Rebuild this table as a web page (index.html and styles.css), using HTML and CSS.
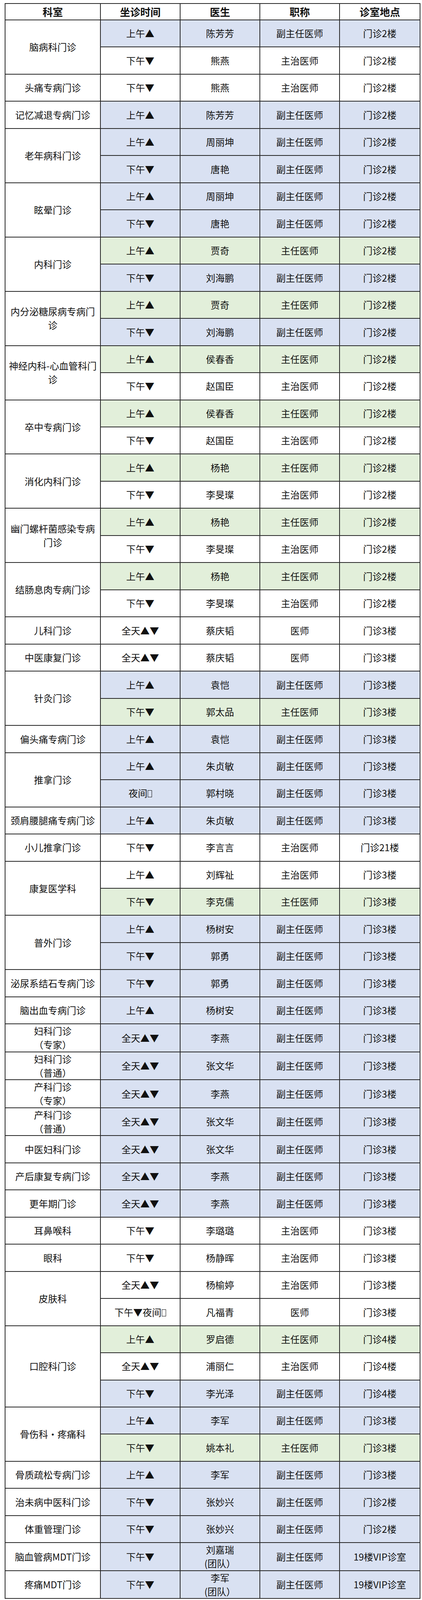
FILE: index.html
```html
<!DOCTYPE html>
<html lang="zh-CN">
<head>
<meta charset="utf-8">
<title>门诊坐诊时间表</title>
<link rel="stylesheet" href="styles.css">
</head>
<body>
<table class="schedule">
<colgroup>
<col class="c-dept"><col class="c-time"><col class="c-doc"><col class="c-title"><col class="c-room">
</colgroup>
<thead>
<tr><th>科室</th><th>坐诊时间</th><th>医生</th><th>职称</th><th>诊室地点</th></tr>
</thead>
<tbody>
<tr class="b"><td class="dept" rowspan="2">脑病科门诊</td><td>上午▲</td><td>陈芳芳</td><td>副主任医师</td><td>门诊2楼</td></tr>
<tr class="w"><td>下午▼</td><td>熊燕</td><td>主治医师</td><td>门诊2楼</td></tr>
<tr class="w"><td class="dept">头痛专病门诊</td><td>下午▼</td><td>熊燕</td><td>主治医师</td><td>门诊2楼</td></tr>
<tr class="b"><td class="dept">记忆减退专病门诊</td><td>上午▲</td><td>陈芳芳</td><td>副主任医师</td><td>门诊2楼</td></tr>
<tr class="b"><td class="dept" rowspan="2">老年病科门诊</td><td>上午▲</td><td>周丽坤</td><td>副主任医师</td><td>门诊2楼</td></tr>
<tr class="b"><td>下午▼</td><td>唐艳</td><td>副主任医师</td><td>门诊2楼</td></tr>
<tr class="b"><td class="dept" rowspan="2">眩晕门诊</td><td>上午▲</td><td>周丽坤</td><td>副主任医师</td><td>门诊2楼</td></tr>
<tr class="b"><td>下午▼</td><td>唐艳</td><td>副主任医师</td><td>门诊2楼</td></tr>
<tr class="g"><td class="dept" rowspan="2">内科门诊</td><td>上午▲</td><td>贾奇</td><td>主任医师</td><td>门诊2楼</td></tr>
<tr class="b"><td>下午▼</td><td>刘海鹏</td><td>副主任医师</td><td>门诊2楼</td></tr>
<tr class="g"><td class="dept" rowspan="2">内分泌糖尿病专病门诊</td><td>上午▲</td><td>贾奇</td><td>主任医师</td><td>门诊2楼</td></tr>
<tr class="b"><td>下午▼</td><td>刘海鹏</td><td>副主任医师</td><td>门诊2楼</td></tr>
<tr class="g"><td class="dept" rowspan="2">神经内科-心血管科门诊</td><td>上午▲</td><td>侯春香</td><td>主任医师</td><td>门诊2楼</td></tr>
<tr class="w"><td>下午▼</td><td>赵国臣</td><td>主治医师</td><td>门诊2楼</td></tr>
<tr class="g"><td class="dept" rowspan="2">卒中专病门诊</td><td>上午▲</td><td>侯春香</td><td>主任医师</td><td>门诊2楼</td></tr>
<tr class="w"><td>下午▼</td><td>赵国臣</td><td>主治医师</td><td>门诊2楼</td></tr>
<tr class="g"><td class="dept" rowspan="2">消化内科门诊</td><td>上午▲</td><td>杨艳</td><td>主任医师</td><td>门诊2楼</td></tr>
<tr class="w"><td>下午▼</td><td>李旻璨</td><td>主治医师</td><td>门诊2楼</td></tr>
<tr class="g"><td class="dept" rowspan="2">幽门螺杆菌感染专病门诊</td><td>上午▲</td><td>杨艳</td><td>主任医师</td><td>门诊2楼</td></tr>
<tr class="w"><td>下午▼</td><td>李旻璨</td><td>主治医师</td><td>门诊2楼</td></tr>
<tr class="g"><td class="dept" rowspan="2">结肠息肉专病门诊</td><td>上午▲</td><td>杨艳</td><td>主任医师</td><td>门诊2楼</td></tr>
<tr class="w"><td>下午▼</td><td>李旻璨</td><td>主治医师</td><td>门诊2楼</td></tr>
<tr class="w"><td class="dept">儿科门诊</td><td>全天▲▼</td><td>蔡庆韬</td><td>医师</td><td>门诊3楼</td></tr>
<tr class="w"><td class="dept">中医康复门诊</td><td>全天▲▼</td><td>蔡庆韬</td><td>医师</td><td>门诊3楼</td></tr>
<tr class="b"><td class="dept" rowspan="2">针灸门诊</td><td>上午▲</td><td>袁恺</td><td>副主任医师</td><td>门诊3楼</td></tr>
<tr class="g"><td>下午▼</td><td>郭太品</td><td>主任医师</td><td>门诊3楼</td></tr>
<tr class="b"><td class="dept">偏头痛专病门诊</td><td>上午▲</td><td>袁恺</td><td>副主任医师</td><td>门诊3楼</td></tr>
<tr class="b"><td class="dept" rowspan="2">推拿门诊</td><td>上午▲</td><td>朱贞敏</td><td>副主任医师</td><td>门诊3楼</td></tr>
<tr class="b"><td>夜间<span class="tofu"></span></td><td>郭村晓</td><td>副主任医师</td><td>门诊3楼</td></tr>
<tr class="b"><td class="dept">颈肩腰腿痛专病门诊</td><td>上午▲</td><td>朱贞敏</td><td>副主任医师</td><td>门诊3楼</td></tr>
<tr class="w"><td class="dept">小儿推拿门诊</td><td>下午▼</td><td>李言言</td><td>主治医师</td><td>门诊21楼</td></tr>
<tr class="w"><td class="dept" rowspan="2">康复医学科</td><td>上午▲</td><td>刘辉祉</td><td>主治医师</td><td>门诊3楼</td></tr>
<tr class="g"><td>下午▼</td><td>李克儒</td><td>主任医师</td><td>门诊3楼</td></tr>
<tr class="b"><td class="dept" rowspan="2">普外门诊</td><td>上午▲</td><td>杨树安</td><td>副主任医师</td><td>门诊3楼</td></tr>
<tr class="b"><td>下午▼</td><td>郭勇</td><td>副主任医师</td><td>门诊3楼</td></tr>
<tr class="b"><td class="dept">泌尿系结石专病门诊</td><td>下午▼</td><td>郭勇</td><td>副主任医师</td><td>门诊3楼</td></tr>
<tr class="b"><td class="dept">脑出血专病门诊</td><td>上午▲</td><td>杨树安</td><td>副主任医师</td><td>门诊3楼</td></tr>
<tr class="b"><td class="dept">妇科门诊<br>（专家）</td><td>全天▲▼</td><td>李燕</td><td>副主任医师</td><td>门诊3楼</td></tr>
<tr class="b"><td class="dept">妇科门诊<br>（普通）</td><td>全天▲▼</td><td>张文华</td><td>副主任医师</td><td>门诊3楼</td></tr>
<tr class="b"><td class="dept">产科门诊<br>（专家）</td><td>全天▲▼</td><td>李燕</td><td>副主任医师</td><td>门诊3楼</td></tr>
<tr class="b"><td class="dept">产科门诊<br>（普通）</td><td>全天▲▼</td><td>张文华</td><td>副主任医师</td><td>门诊3楼</td></tr>
<tr class="b"><td class="dept">中医妇科门诊</td><td>全天▲▼</td><td>张文华</td><td>副主任医师</td><td>门诊3楼</td></tr>
<tr class="b"><td class="dept">产后康复专病门诊</td><td>全天▲▼</td><td>李燕</td><td>副主任医师</td><td>门诊3楼</td></tr>
<tr class="b"><td class="dept">更年期门诊</td><td>全天▲▼</td><td>李燕</td><td>副主任医师</td><td>门诊3楼</td></tr>
<tr class="w"><td class="dept">耳鼻喉科</td><td>下午▼</td><td>李璐璐</td><td>主治医师</td><td>门诊3楼</td></tr>
<tr class="w"><td class="dept">眼科</td><td>下午▼</td><td>杨静晖</td><td>主治医师</td><td>门诊3楼</td></tr>
<tr class="w"><td class="dept" rowspan="2">皮肤科</td><td>全天▲▼</td><td>杨榆婷</td><td>主治医师</td><td>门诊3楼</td></tr>
<tr class="w"><td>下午▼夜间<span class="tofu"></span></td><td>凡福青</td><td>医师</td><td>门诊3楼</td></tr>
<tr class="g"><td class="dept" rowspan="3">口腔科门诊</td><td>上午▲</td><td>罗启德</td><td>主任医师</td><td>门诊4楼</td></tr>
<tr class="w"><td>全天▲▼</td><td>浦丽仁</td><td>主治医师</td><td>门诊4楼</td></tr>
<tr class="b"><td>下午▼</td><td>李光泽</td><td>副主任医师</td><td>门诊4楼</td></tr>
<tr class="b"><td class="dept" rowspan="2">骨伤科·疼痛科</td><td>上午▲</td><td>李军</td><td>副主任医师</td><td>门诊3楼</td></tr>
<tr class="g"><td>下午▼</td><td>姚本礼</td><td>主任医师</td><td>门诊3楼</td></tr>
<tr class="b"><td class="dept">骨质疏松专病门诊</td><td>上午▲</td><td>李军</td><td>副主任医师</td><td>门诊3楼</td></tr>
<tr class="b"><td class="dept">治未病中医科门诊</td><td>下午▼</td><td>张妙兴</td><td>副主任医师</td><td>门诊2楼</td></tr>
<tr class="b"><td class="dept">体重管理门诊</td><td>下午▼</td><td>张妙兴</td><td>副主任医师</td><td>门诊2楼</td></tr>
<tr class="b"><td class="dept">脑血管病MDT门诊</td><td>下午▼</td><td>刘嘉瑞<br>(团队）</td><td>副主任医师</td><td>19楼VIP诊室</td></tr>
<tr class="b"><td class="dept">疼痛MDT门诊</td><td>下午▼</td><td>李军<br>(团队）</td><td>副主任医师</td><td>19楼VIP诊室</td></tr>
</tbody>
</table>
</body>
</html>
```
FILE: styles.css
```css
/* One unit = one pixel of the 6308px-tall design; scales with the window height. */
:root {
  --u: calc(100vh / 6308);
}

html, body {
  margin: 0;
  background: #ffffff;
}

body {
  padding: calc(12 * var(--u)) 0 0 12px;
  font-family: "Noto Sans CJK SC", "Noto Sans", "DejaVu Sans", sans-serif;
  color: #111111;
}

.schedule {
  border-collapse: collapse;
  table-layout: fixed;
  width: 1062px;
}

.c-dept { width: 244px; }
.c-time { width: 204px; }
.c-doc { width: 204px; }
.c-title { width: 204px; }
.c-room { width: 206px; }

.schedule th,
.schedule td {
  border: 2px solid #262626;
  text-align: center;
  vertical-align: middle;
  padding: 0 4px;
}

.schedule thead tr {
  height: calc(65 * var(--u));
}

.schedule th {
  font-size: 26px;
  font-weight: 700;
  line-height: 36px;
  background: #ffffff;
}

.schedule tbody tr {
  height: calc(107 * var(--u));
}

.schedule td {
  font-size: 24px;
  line-height: 34.75px;
  background: #ffffff;
}

.schedule tr.b td { background: #d9e1f2; }
.schedule tr.g td { background: #e2efda; }
.schedule tr.w td { background: #ffffff; }

.schedule tr td.dept {
  background: #ffffff;
}

.tofu {
  display: inline-block;
  width: 9px;
  height: 16px;
  border: 1.5px solid #111111;
  margin-left: 1px;
  vertical-align: -1px;
}
```
